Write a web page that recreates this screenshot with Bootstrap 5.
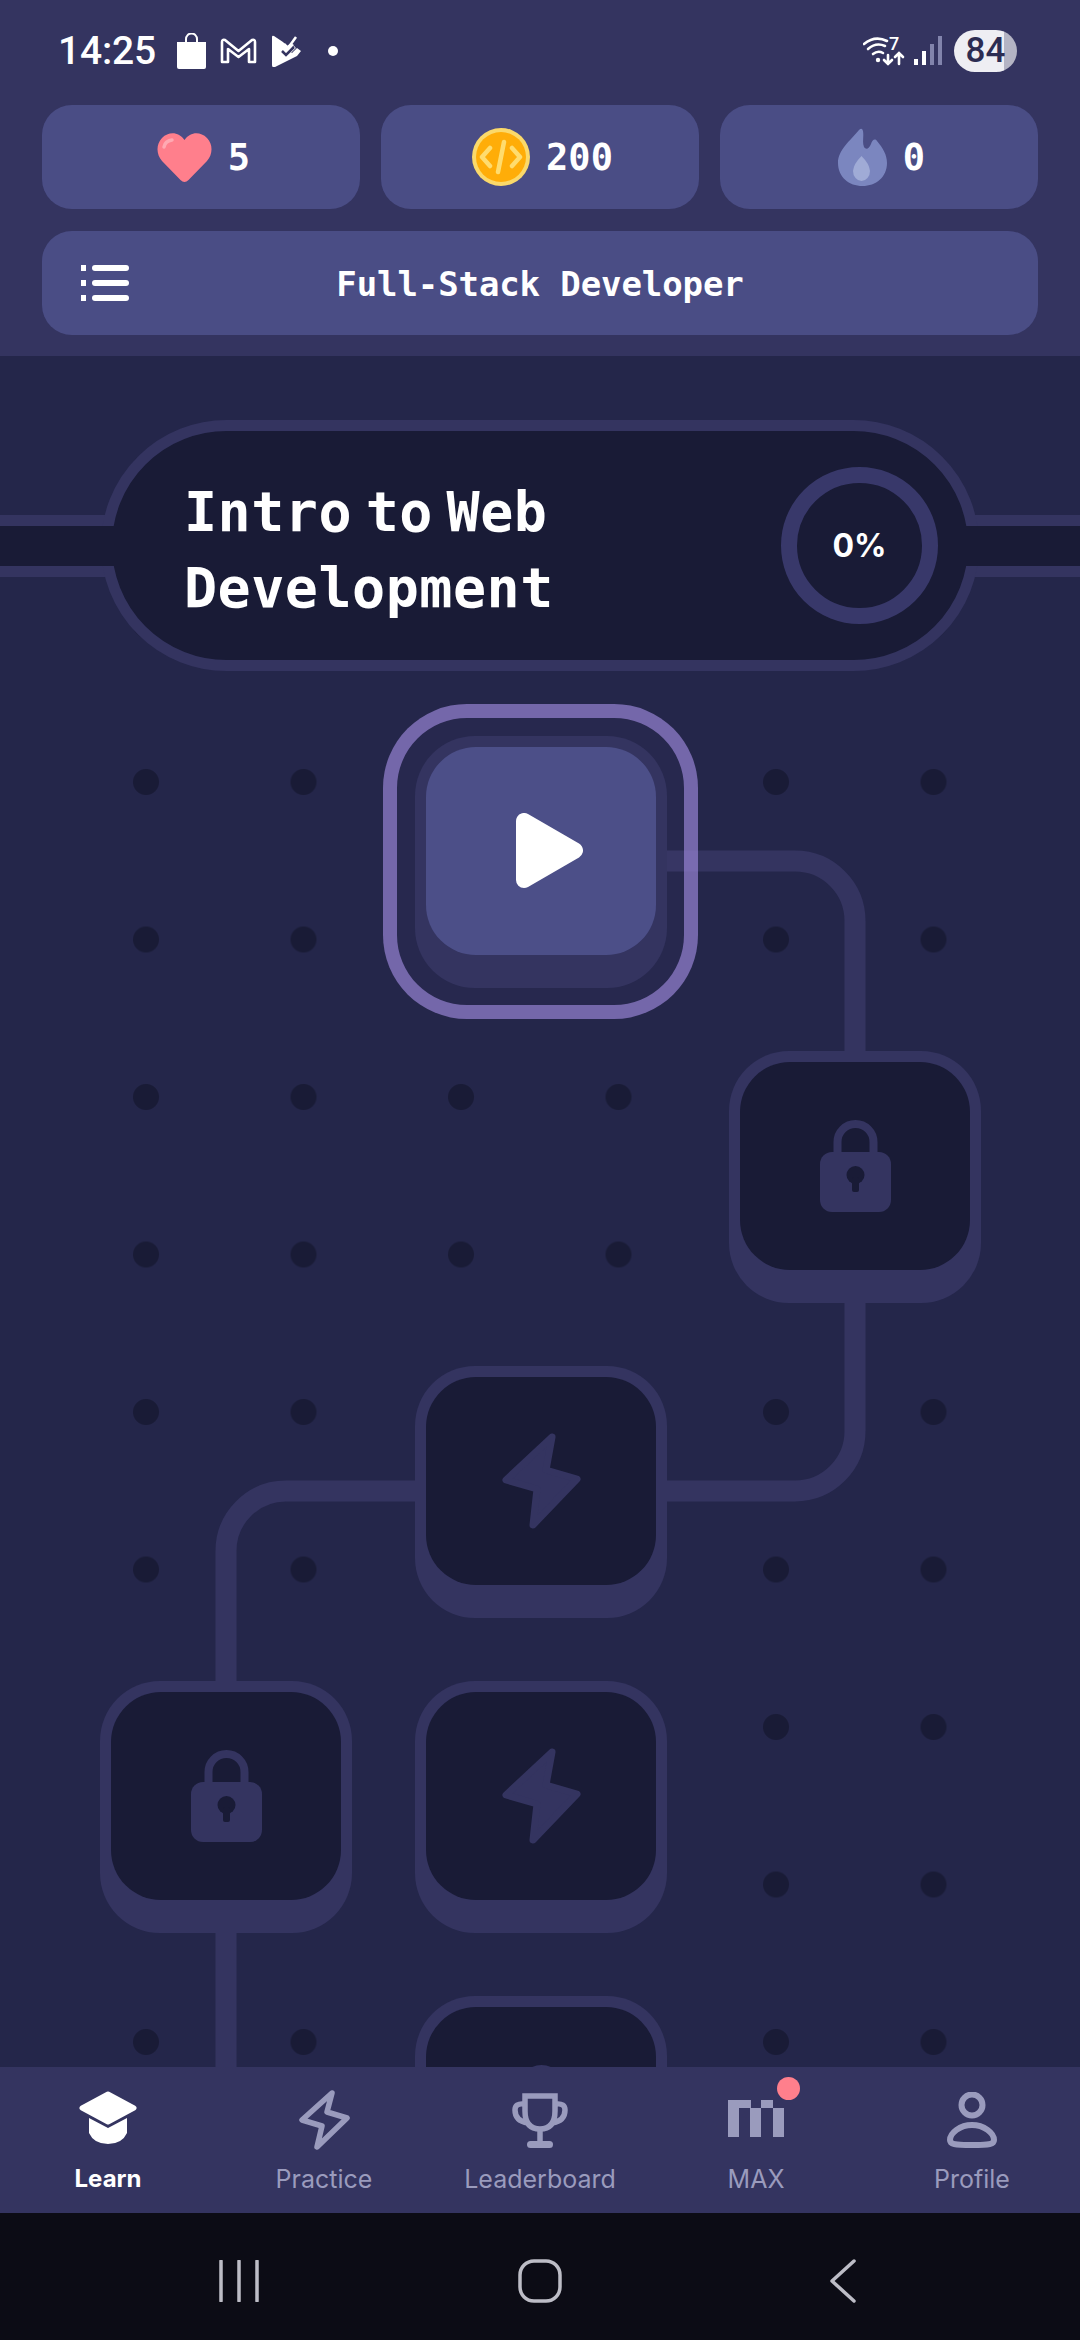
<!DOCTYPE html>
<html lang="en">

<head>
    <meta charset="UTF-8" />
    <title>Learn</title>
    <link rel="stylesheet" href="https://cdn.jsdelivr.net/npm/bootstrap@5.3.0/dist/css/bootstrap.min.css">
    <style>
        body {
            width: 1080px;
            height: 2340px;
            overflow: hidden;
            background: #0c0c15;
            font-family: "Inter", "Liberation Sans", sans-serif;
        }

        .app-shell {
            width: 1080px;
            height: 2340px;
        }

        /* header */
        .top-head {
            height: 356px;
            padding: 0 42px;
            background: #343460;
            color: #fff;
        }

        .status-row {
            height: 105px;
            padding: 0 21px 3px 16px;
        }

        .clock {
            font-family: "Roboto", sans-serif;
            font-weight: 500;
            font-size: 39px;
            line-height: 1;
            width: 97px;
            letter-spacing: -0.2px;
        }

        .ic-bag { margin-left: 21px; }
        .ic-mail { margin-left: 13px; }
        .ic-tick { margin-left: 15px; }
        .ic-dot { margin-left: 26px; }
        .ic-signal { margin-left: 9px; }

        .batt-pill {
            width: 63px;
            height: 42px;
            margin-left: 12px;
            border-radius: 21px;
            background: linear-gradient(90deg, #eeeef3 80%, #b4b4c4 80%);
            color: #2c2c52;
            font-family: "Roboto", sans-serif;
            font-weight: 500;
            font-size: 35px;
            line-height: 42px;
            text-align: center;
        }

        .stat-row {
            gap: 21px;
            height: 104px;
        }

        .stat-box {
            width: 318px;
            height: 104px;
            gap: 16px;
            padding-left: 5px;
            background: #4a4d85;
            border-radius: 30px;
            font-family: "DejaVu Sans Mono", monospace;
            font-weight: 700;
            font-size: 37px;
        }

        .stat-box span {
            padding-top: 2px;
        }

        .course-bar {
            height: 104px;
            margin-top: 22px;
            background: #4a4d85;
            border-radius: 30px;
        }

        .bar-side {
            width: 130px;
            padding-left: 39px;
        }

        .course-name {
            padding-top: 3px;
            font-family: "DejaVu Sans Mono", monospace;
            font-weight: 700;
            font-size: 34px;
            letter-spacing: -0.1px;
        }

        /* map */
        .path-map {
            height: 1711px;
            background-color: #24264a;
            background-image:
                linear-gradient(90deg, #24264a 20px, transparent 20px, transparent 1060px, #24264a 1060px),
                radial-gradient(circle at center, #191b36 12.5px, transparent 13.5px);
            background-size: 1080px 100%, 157.5px 157.5px;
            background-position: 0 0, 67.25px 347.25px;
        }

        .unit-band {
            height: 251px;
            margin-top: 64px;
        }

        .unit-line {
            left: 0;
            right: 0;
            top: 95px;
            height: 62px;
            background: #191b36;
            border-top: 11px solid #343460;
            border-bottom: 11px solid #343460;
        }

        .unit-pill {
            width: 878px;
            height: 251px;
            padding: 0 30px 0 72px;
            background: #191b36;
            border: 11px solid #343460;
            border-radius: 126px;
            color: #fff;
        }

        .unit-pill::before {
            content: "";
            position: absolute;
            left: -11px;
            right: -11px;
            top: 94.5px;
            height: 40px;
            background: #191b36;
        }

        .unit-title {
            position: relative;
            margin-top: 8px;
            font-family: "DejaVu Sans Mono", monospace;
            font-weight: 700;
            font-size: 55px;
            line-height: 76px;
            letter-spacing: 0.5px;
            word-spacing: -20px;
        }

        .pct-ring {
            position: relative;
            width: 157px;
            height: 157px;
            border: 16px solid #38386a;
            font-weight: 700;
            font-size: 32px;
        }

        .map-lines {
            left: 0;
            top: 0;
        }

        .step-node {
            width: 252px;
            height: 252px;
            padding: 11px 11px 33px;
            background: #343460;
            border-radius: 60px;
        }

        .step-face {
            height: 100%;
            background: #191b36;
            border-radius: 50px;
        }

        .step-node.is-current .step-face {
            background: #4c4f88;
        }

        .play-mark {
            margin-left: 18px;
        }

        .focus-ring-box {
            left: 383px;
            top: 348px;
            width: 315px;
            height: 315px;
            border: 14px solid rgba(150, 130, 210, 0.7);
            border-radius: 84px;
            background: rgba(150, 130, 210, 0.03);
        }

        .col-a { left: 100px; }
        .col-b { left: 415px; }
        .col-c { left: 729px; }
        .row-b { top: 695px; }
        .row-c { top: 1010px; }
        .row-d { top: 1325px; }
        .row-e { top: 1640px; }

        /* tab bar */
        .tab-strip {
            height: 146px;
            background: #343460;
            color: #9a9bbd;
        }

        .tab-item {
            width: 216px;
            padding-top: 21px;
            font-size: 25px;
            line-height: 30px;
        }

        .tab-item.is-on {
            color: #fff;
            font-weight: 700;
            font-size: 24px;
        }

        .tab-glyph {
            height: 64px;
            margin-bottom: 12px;
        }

        .tab-dot {
            width: 23px;
            height: 23px;
            left: 49px;
            top: -11px;
            background: #ff7f8c;
        }

        /* android bar */
        .sys-bar {
            height: 127px;
            padding-top: 9px;
            background: #0c0c15;
        }

        .sys-slot {
            width: 303px;
        }

        .sys-lines {
            margin-left: 3px;
        }
    </style>
</head>

<body>
    <div class="app-shell d-flex flex-column">
        <header class="top-head">
            <div class="status-row d-flex align-items-center">
                <span class="clock">14:25</span>
                <svg class="ic-bag" width="31" height="36" viewBox="0 0 31 36">
                    <path d="M10 9V6a5.500 5.500 0 0 1 11 0v3" fill="none" stroke="#fff" stroke-width="2" />
                    <path d="M1 9h29v25a2 2 0 0 1-2 2H3a2 2 0 0 1-2-2z" fill="#fff" />
                </svg>
                <svg class="ic-mail" width="37" height="28" viewBox="0 0 37 28">
                    <path d="M2 25V5q0-3 3-2l13.500 11L32 3q3-1 3 2v20h-6V12l-10.500 8L8 12v13z" fill="none" stroke="#fff" stroke-width="2.600" stroke-linejoin="round" />
                </svg>
                <svg class="ic-tick" width="30" height="32" viewBox="0 0 30 32">
                    <path d="M0 2q0-2 2-1l9 6 4 4 4-3 3 2-5 6 3 2 5-5 4 3-4 5-22 11q-3 1-3-2z" fill="#fff" />
                    <path d="M12 9l4 4 8-11M10 17l4 4 9-9" fill="none" stroke="#fff" stroke-width="2.500" />
                    <path d="M10 16l4 4 8-8" fill="none" stroke="#343460" stroke-width="2.500" />
                </svg>
                <svg class="ic-dot" width="10" height="10" viewBox="0 0 10 10">
                    <circle cx="5" cy="5" r="5" fill="#fff" />
                </svg>
                <div class="flex-fill"></div>
                <svg width="42" height="40" viewBox="0 -5 42 40">
                    <g fill="none" stroke="#fff" stroke-width="2.600" stroke-linecap="round">
                        <path d="M1 8q11-9 23-3" />
                        <path d="M5 13q8-7 17-3" />
                        <path d="M10 18q5-4 10-1" />
                        <path d="M25 19v9M21 24l4 4 4-4" />
                        <path d="M36 28v-10M32 21l4-4 4 4" />
                    </g>
                    <circle cx="15" cy="24" r="2.200" fill="#fff" />
                    <text x="26" y="14" fill="#fff" font-family="Roboto, sans-serif" font-size="18" font-weight="500">7</text>
                </svg>
                <svg class="ic-signal" width="28" height="30" viewBox="0 0 28 30">
                    <rect x="0" y="23" width="4" height="6" fill="#fff" />
                    <rect x="8" y="15" width="4" height="14" fill="#fff" />
                    <rect x="16" y="8" width="4" height="21" fill="#8284ac" />
                    <rect x="24" y="0" width="4" height="29" fill="#8284ac" />
                </svg>
                <span class="batt-pill">84</span>
            </div>

            <div class="stat-row d-flex">
                <div class="stat-box d-flex align-items-center justify-content-center">
                    <svg width="55" height="49" viewBox="0 0 55 49">
                        <path d="M27.500 49q-2 0-4-2L5 28C-1 21-1 11 5 5c7-7 17-6 22.500 2C33 -1 43-2 50 5c6 6 6 16 0 23L31.500 47q-2 2-4 2z" fill="#ff7f8c" />
                        <path d="M7 14q1-6 8-7" fill="none" stroke="#ffa9b2" stroke-width="3.500" stroke-linecap="round" />
                    </svg>
                    <span>5</span>
                </div>
                <div class="stat-box d-flex align-items-center justify-content-center">
                    <svg width="58" height="58" viewBox="0 0 58 58">
                        <circle cx="29" cy="29" r="29" fill="#fbd96a" />
                        <circle cx="29" cy="29" r="25" fill="#ffad08" />
                        <path d="M18 20l-8 9 8 9M40 20l8 9-8 9M32 14l-6 30" fill="none" stroke="#ffdc6e" stroke-width="4.500" stroke-linecap="round" stroke-linejoin="round" />
                    </svg>
                    <span>200</span>
                </div>
                <div class="stat-box d-flex align-items-center justify-content-center">
                    <svg width="49" height="58" viewBox="0 0 49 58">
                        <path d="M21 2q3-3 4 1c1 6-1 11 1 16 2 3 5 2 7-3 1-4 4-6 6-3 6 7 10 14 10 22 0 14-11 23-24.500 23S0 49 0 35C0 22 12 13 21 2z" fill="#7b86bf" />
                        <path d="M23.500 28q8 8 8.500 15a8.500 10 0 0 1-17 0q.5-7 8.500-15z" fill="#a0abd6" />
                    </svg>
                    <span>0</span>
                </div>
            </div>

            <div class="course-bar d-flex align-items-center">
                <div class="bar-side">
                    <svg width="48" height="36" viewBox="0 0 48 36">
                        <g fill="#fff">
                            <rect x="0" y="0" width="5" height="6" />
                            <rect x="0" y="15" width="5" height="6" />
                            <rect x="0" y="30" width="5" height="6" />
                            <rect x="11" y="0" width="37" height="6" rx="3" />
                            <rect x="11" y="15" width="37" height="6" rx="3" />
                            <rect x="11" y="30" width="37" height="6" rx="3" />
                        </g>
                    </svg>
                </div>
                <div class="course-name flex-fill text-center">Full-Stack Developer</div>
                <div class="bar-side"></div>
            </div>
        </header>

        <main class="path-map position-relative overflow-hidden">
            <svg class="map-lines position-absolute" width="1080" height="1711" viewBox="0 0 1080 1711">
                <g fill="none" stroke="#343460" stroke-width="21">
                    <path d="M660 505H795A60 60 0 0 1 855 565V700" />
                    <path d="M855 940V1075A60 60 0 0 1 795 1135H660" />
                    <path d="M420 1135H286A60 60 0 0 0 226 1195V1330" />
                    <path d="M226 1570V1711" />
                </g>
            </svg>

            <div class="unit-band position-relative d-flex justify-content-center">
                <div class="unit-line position-absolute"></div>
                <div class="unit-pill position-relative d-flex align-items-center justify-content-between">
                    <div class="unit-title">Intro to Web<br>Development</div>
                    <div class="pct-ring rounded-circle d-flex align-items-center justify-content-center">0%</div>
                </div>
            </div>

            <div class="focus-ring-box position-absolute d-flex align-items-center justify-content-center">
                <div class="step-node is-current flex-shrink-0">
                    <div class="step-face d-flex align-items-center justify-content-center">
                        <svg class="play-mark" width="67" height="75" viewBox="0 0 67 75">
                            <path d="M8 8V67L59 37.500Z" fill="#fff" stroke="#fff" stroke-width="16" stroke-linejoin="round" />
                        </svg>
                    </div>
                </div>
            </div>

            <div class="step-node position-absolute col-c row-b">
                <div class="step-face d-flex align-items-center justify-content-center">
                    <svg width="71" height="92" viewBox="0 0 71 92">
                        <path d="M17.500 38V22a18 18 0 0 1 36 0V38" fill="none" stroke="#343460" stroke-width="8" />
                        <rect y="32" width="71" height="60" rx="12" fill="#343460" />
                        <circle cx="35.500" cy="55" r="9" fill="#191b36" />
                        <rect x="32" y="57" width="7" height="15" rx="2" fill="#191b36" />
                    </svg>
                </div>
            </div>

            <div class="step-node position-absolute col-b row-c">
                <div class="step-face d-flex align-items-center justify-content-center">
                    <svg width="79" height="96" viewBox="0 0 79 96">
                        <path d="M50 4L4 47L35 56L31 92L75 46L44 37Z" fill="#343460" stroke="#343460" stroke-width="7" stroke-linejoin="round" />
                    </svg>
                </div>
            </div>

            <div class="step-node position-absolute col-a row-d">
                <div class="step-face d-flex align-items-center justify-content-center">
                    <svg width="71" height="92" viewBox="0 0 71 92">
                        <path d="M17.500 38V22a18 18 0 0 1 36 0V38" fill="none" stroke="#343460" stroke-width="8" />
                        <rect y="32" width="71" height="60" rx="12" fill="#343460" />
                        <circle cx="35.500" cy="55" r="9" fill="#191b36" />
                        <rect x="32" y="57" width="7" height="15" rx="2" fill="#191b36" />
                    </svg>
                </div>
            </div>

            <div class="step-node position-absolute col-b row-d">
                <div class="step-face d-flex align-items-center justify-content-center">
                    <svg width="79" height="96" viewBox="0 0 79 96">
                        <path d="M50 4L4 47L35 56L31 92L75 46L44 37Z" fill="#343460" stroke="#343460" stroke-width="7" stroke-linejoin="round" />
                    </svg>
                </div>
            </div>

            <div class="step-node position-absolute col-b row-e">
                <div class="step-face d-flex align-items-center justify-content-center">
                    <svg width="71" height="92" viewBox="0 0 71 92">
                        <path d="M17.500 38V22a18 18 0 0 1 36 0V38" fill="none" stroke="#343460" stroke-width="8" />
                        <rect y="32" width="71" height="60" rx="12" fill="#343460" />
                    </svg>
                </div>
            </div>
        </main>

        <nav class="tab-strip d-flex">
            <div class="tab-item is-on d-flex flex-column align-items-center">
                <div class="tab-glyph d-flex align-items-end pb-2">
                    <svg width="58" height="53" viewBox="0 0 58 53">
                        <path d="M29 3L55 17L29 31L3 17Z" fill="#fff" stroke="#fff" stroke-width="5" stroke-linejoin="round" />
                        <path d="M10 27L29 37L48 27V42Q43 53 29 53Q15 53 10 42Z" fill="#fff" />
                    </svg>
                </div>
                <span>Learn</span>
            </div>
            <div class="tab-item d-flex flex-column align-items-center">
                <div class="tab-glyph">
                    <svg width="53" height="63" viewBox="0 0 53 63">
                        <path d="M34 5L4 32L24 38L19 59L49 30L29 24Z" fill="none" stroke="#9a9bbd" stroke-width="5.500" stroke-linejoin="round" />
                    </svg>
                </div>
                <span>Practice</span>
            </div>
            <div class="tab-item d-flex flex-column align-items-center">
                <div class="tab-glyph d-flex align-items-end pb-1">
                    <svg width="56" height="55" viewBox="0 0 56 55">
                        <g fill="none" stroke="#9a9bbd" stroke-width="5.500">
                            <path d="M13 3H43V18Q43 36 28 36Q13 36 13 18Z" />
                            <path d="M12 11Q3 10 3 17Q3 28 16 30" />
                            <path d="M44 11Q53 10 53 17Q53 28 40 30" />
                            <path d="M28 36V50" />
                        </g>
                        <rect x="15" y="48" width="26" height="7" rx="3.500" fill="#9a9bbd" />
                    </svg>
                </div>
                <span>Leaderboard</span>
            </div>
            <div class="tab-item d-flex flex-column align-items-center">
                <div class="tab-glyph position-relative d-flex align-items-center pb-1">
                    <svg width="56" height="37" viewBox="0 0 56 37">
                        <g fill="#9a9bbd">
                            <path d="M0 0H23V8H11V37H0Z" />
                            <rect x="22" y="8" width="11" height="29" />
                            <rect x="33" y="0" width="12" height="8" />
                            <rect x="45" y="8" width="11" height="29" />
                        </g>
                    </svg>
                    <span class="tab-dot position-absolute rounded-circle"></span>
                </div>
                <span>MAX</span>
            </div>
            <div class="tab-item d-flex flex-column align-items-center">
                <div class="tab-glyph d-flex align-items-end pb-1">
                    <svg width="50" height="56" viewBox="0 0 50 56">
                        <g fill="none" stroke="#9a9bbd" stroke-width="6">
                            <circle cx="25" cy="13" r="10.500" />
                            <path d="M25 33C13 33 3 41 3 48C3 52 7 53 25 53C43 53 47 52 47 48C47 41 37 33 25 33Z" stroke-linejoin="round" />
                        </g>
                    </svg>
                </div>
                <span>Profile</span>
            </div>
        </nav>

        <div class="sys-bar d-flex justify-content-center align-items-center">
            <div class="sys-slot d-flex justify-content-center">
                <svg class="sys-lines" width="40" height="42" viewBox="0 0 40 42">
                    <path d="M2 1V41M20 1V41M38 1V41" fill="none" stroke="#bdbdc6" stroke-width="3.500" stroke-linecap="round" />
                </svg>
            </div>
            <div class="sys-slot d-flex justify-content-center">
                <svg width="44" height="44" viewBox="0 0 44 44">
                    <rect x="2" y="2" width="40" height="40" rx="14" fill="none" stroke="#bdbdc6" stroke-width="3.500" />
                </svg>
            </div>
            <div class="sys-slot d-flex justify-content-center">
                <svg width="28" height="44" viewBox="0 0 28 44">
                    <path d="M25 2L3 22L25 42" fill="none" stroke="#bdbdc6" stroke-width="3.500" stroke-linecap="round" stroke-linejoin="round" />
                </svg>
            </div>
        </div>
    </div>

    <script src="https://cdn.jsdelivr.net/npm/bootstrap@5.3.0/dist/js/bootstrap.bundle.min.js"></script>
</body>

</html>
